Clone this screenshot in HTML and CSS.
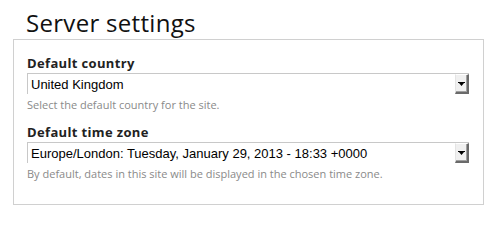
FILE: index.html
```html
<!DOCTYPE html>
<html lang="en">
<head>
<meta charset="utf-8">
<title>Server settings</title>
<link rel="stylesheet" href="styles.css">
</head>
<body>
<div class="page">
  <h1 class="title">Server settings</h1>
  <fieldset class="panel">
    <div class="field">
      <label class="label" for="country">Default country</label>
      <div class="select">
        <select id="country" class="select-input">
          <option>United Kingdom</option>
        </select>
        <span class="select-btn"><svg width="7" height="5" viewBox="0 0 7 5"><path d="M0 0H7V1H6L3.5 4 1 1H0Z" fill="#000"/></svg></span>
      </div>
      <div class="desc">Select the default country for the site.</div>
    </div>
    <div class="field field-next">
      <label class="label" for="tz">Default time zone</label>
      <div class="select">
        <select id="tz" class="select-input">
          <option>Europe/London: Tuesday, January 29, 2013 - 18:33 +0000</option>
        </select>
        <span class="select-btn"><svg width="7" height="5" viewBox="0 0 7 5"><path d="M0 0H7V1H6L3.5 4 1 1H0Z" fill="#000"/></svg></span>
      </div>
      <div class="desc">By default, dates in this site will be displayed in the chosen time zone.</div>
    </div>
  </fieldset>
</div>
</body>
</html>
```
FILE: styles.css
```css
html, body {
  margin: 0;
  padding: 0;
  background: #fff;
}
.page {
  padding-left: 13px;
  width: 471px;
  font-family: "Open Sans", "Liberation Sans", sans-serif;
}
.title {
  margin: 9px 0 2px;
  padding-left: 13px;
  font-size: 24px;
  line-height: 28px;
  font-weight: 400;
  letter-spacing: 0.3px;
  color: #111;
}
.panel {
  margin: 0;
  border: 1px solid #d0d0d0;
  padding: 15px 14px 23px 13px;
  min-width: 0;
}
.field {
  display: flex;
  flex-direction: column;
}
.field-next {
  margin-top: 12px;
}
.label {
  font-size: 13px;
  line-height: 16px;
  font-weight: 700;
  letter-spacing: 0.35px;
  color: #222;
  margin-bottom: 2px;
}
.select {
  display: flex;
  height: 21px;
  box-sizing: border-box;
  border: 1px solid #c8c8c8;
  border-right: 0;
  border-bottom: 0;
  background: #fff;
}
.select-input {
  flex: 1;
  appearance: none;
  -webkit-appearance: none;
  border: 0;
  margin: 0;
  padding: 0 0 0 3px;
  background: transparent;
  font-family: "Liberation Sans", Arial, sans-serif;
  font-size: 13px;
  color: #000;
  outline: none;
}
.select-btn {
  width: 14px;
  box-sizing: border-box;
  display: flex;
  align-items: center;
  justify-content: center;
  background: #f0f0f0;
  border-left: 1px solid #e4e4e4;
  border-top: 1px solid #fff;
  border-right: 2px solid #6a6a6a;
  border-bottom: 2px solid #6a6a6a;
  box-shadow: inset -1px -1px 0 #a0a0a0;
}
.select-btn svg {
  display: block;
  margin-top: 1px;
}
.desc {
  margin-top: 3px;
  font-size: 11px;
  line-height: 15px;
  color: #8a8a8a;
}
```
